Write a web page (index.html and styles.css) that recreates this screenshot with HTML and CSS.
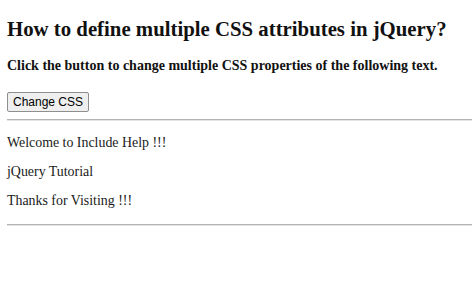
FILE: index.html
```html
<!DOCTYPE html>
<html>
<head>
<meta charset="utf-8">
<link rel="stylesheet" href="styles.css">
</head>
<body>
<main class="page">
  <h2 class="title">How to define multiple CSS attributes in jQuery?</h2>
  <h4 class="subtitle">Click the button to change multiple CSS properties of the following text.</h4>
  <div class="actions"><button class="btn" type="button">Change CSS</button></div>
  <hr class="rule rule-top">
  <section class="texts">
    <p class="line">Welcome to Include Help !!!</p>
    <p class="line">jQuery Tutorial</p>
    <p class="line">Thanks for Visiting !!!</p>
  </section>
  <hr class="rule rule-bottom">
</main>
</body>
</html>
```
FILE: styles.css
```css
html, body {
  margin: 0;
  padding: 0;
  background: #ffffff;
}
.page {
  padding: 0 2px 0 7px;
  font-family: "Liberation Serif", "Times New Roman", serif;
  color: #111111;
}
.title {
  margin: 17px 0 0;
  font-size: 20.8px;
  line-height: 24px;
  font-weight: bold;
}
.subtitle {
  margin: 17px 0 0;
  font-size: 14px;
  line-height: 16px;
  font-weight: bold;
}
.actions {
  margin-top: 18px;
  display: flex;
}
.btn {
  font-family: "Liberation Sans", Arial, sans-serif;
  font-size: 12px;
  line-height: 14px;
  height: 20px;
  width: 82px;
  padding: 0 4px;
  background: #efefef;
  border: 1px solid #8f8f8f;
  border-radius: 2px;
  color: #000;
}
.rule {
  border: none;
  border-top: 1px solid #b4b4b4;
  border-bottom: 1px solid #e4e4e4;
  margin: 0;
  height: 0;
}
.rule-top { margin-top: 7px; }
.texts {
  display: flex;
  flex-direction: column;
  gap: 12px;
  margin-top: 13px;
}
.line {
  margin: 0;
  font-size: 13.9px;
  line-height: 17px;
  color: #1a1a1a;
}
.rule-bottom { margin-top: 15px; }
```
